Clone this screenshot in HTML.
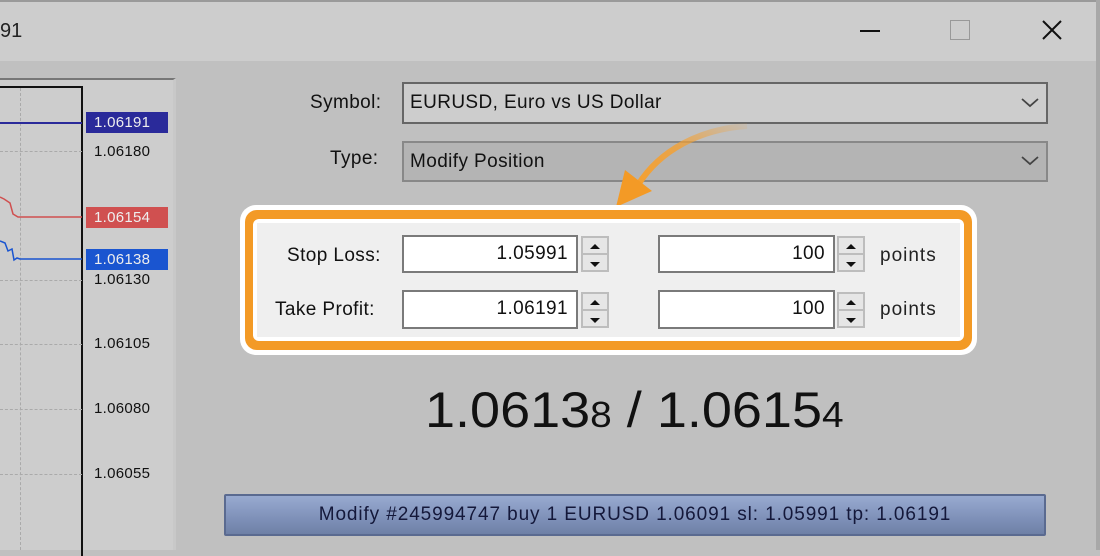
<!DOCTYPE html>
<html><head><meta charset="utf-8"><style>
*{margin:0;padding:0;box-sizing:border-box}
body{width:1100px;height:550px;overflow:hidden;background:#c0c0c0;font-family:"Liberation Sans",sans-serif;position:relative}
.a{position:absolute}
.lbl{font-size:19px;color:#111;letter-spacing:0.4px}
.inp{position:absolute;background:#fff;border:2px solid #7a7a7a;font-size:19px;text-align:right;padding-right:8px;line-height:33px;color:#111;letter-spacing:0.4px}
.spin{position:absolute;width:28px;height:36px;background:#bdbdbd}
.spin div{position:absolute;left:2px;width:24px;height:15px;background:#e6e6e6}
.pl{position:absolute;left:94px;font-size:15px;color:#111;letter-spacing:0.3px}
.tag{position:absolute;left:86px;width:82px;height:21px;color:#eee;font-size:15px;line-height:21px;padding-left:8px;letter-spacing:0.3px}
</style></head><body>
<div class="a" style="left:0;top:0;width:1100px;height:61px;background:#cdcdcd;border-top:2px solid #9a9a9a"></div>
<div class="a" style="left:1096px;top:0;width:4px;height:550px;background:#a8a8a8"></div>
<div class="a" style="left:0;top:20px;font-size:20px;color:#222">91</div>
<div class="a" style="left:860px;top:30px;width:20px;height:2px;background:#111"></div>
<div class="a" style="left:950px;top:20px;width:20px;height:20px;border:1px solid #999"></div>
<svg class="a" style="left:1040px;top:18px" width="24" height="24"><path d="M3 3L21 21M21 3L3 21" stroke="#111" stroke-width="2"/></svg>
<div class="a" style="left:0;top:78px;width:176px;height:472px;background:#cdcdcd;border-top:2px solid #777;border-right:3px solid #c8c8c8"></div>
<div class="a" style="left:0;top:86px;width:83px;height:470px;border-top:2px solid #111;border-right:2px solid #111"></div>
<div class="a" style="left:20px;top:88px;height:462px;border-left:1px dashed #aaa"></div>
<div class="a" style="left:0;top:151px;width:82px;border-top:1px dashed #aaa"></div>
<div class="a" style="left:0;top:280px;width:82px;border-top:1px dashed #aaa"></div>
<div class="a" style="left:0;top:344px;width:82px;border-top:1px dashed #aaa"></div>
<div class="a" style="left:0;top:409px;width:82px;border-top:1px dashed #aaa"></div>
<div class="a" style="left:0;top:474px;width:82px;border-top:1px dashed #aaa"></div>
<div class="a" style="left:0;top:122px;width:82px;height:2px;background:#2a2a9a"></div>
<svg class="a" style="left:0;top:190px" width="84" height="80"><path d="M0 7L4 9L10 13L13 24L18 27L82 27" stroke="#d05050" stroke-width="1.5" fill="none"/><path d="M0 51L5 53L8 61L12 59L14 70L17 68L20 69L20 69L82 69" stroke="#1a55d0" stroke-width="1.5" fill="none"/></svg>
<div class="tag" style="top:112px;background:#2a2a9a">1.06191</div>
<div class="pl" style="top:143px">1.06180</div>
<div class="tag" style="top:207px;background:#d05050">1.06154</div>
<div class="tag" style="top:249px;background:#1a55d0">1.06138</div>
<div class="pl" style="top:271px">1.06130</div>
<div class="pl" style="top:335px">1.06105</div>
<div class="pl" style="top:400px">1.06080</div>
<div class="pl" style="top:465px">1.06055</div>
<div class="a lbl" style="left:310px;top:92px">Symbol:</div>
<div class="a" style="left:402px;top:82px;width:646px;height:42px;background:#cdcdcd;border:2px solid #666;font-size:19px;line-height:38px;padding-left:6px;color:#111;letter-spacing:0.4px">EURUSD, Euro vs US Dollar</div>
<div class="a lbl" style="left:330px;top:148px">Type:</div>
<div class="a" style="left:402px;top:141px;width:646px;height:41px;background:#b4b4b4;border:2px solid #888;font-size:19px;line-height:37px;padding-left:6px;color:#111;letter-spacing:0.4px">Modify Position</div>
<svg class="a" style="left:1020px;top:96px" width="20" height="14"><path d="M2 3L10 10L18 3" stroke="#444" stroke-width="1.8" fill="none"/></svg>
<svg class="a" style="left:1020px;top:154px" width="20" height="14"><path d="M2 3L10 10L18 3" stroke="#444" stroke-width="1.8" fill="none"/></svg>
<svg class="a" style="left:600px;top:115px" width="160" height="100"><defs><linearGradient id="g" x1="1" y1="0" x2="0" y2="1"><stop offset="0" stop-color="#f5a030" stop-opacity="0.1"/><stop offset="0.5" stop-color="#f5a030" stop-opacity="0.8"/><stop offset="1" stop-color="#f5a030"/></linearGradient></defs><path d="M147 11C100 14 60 35 38 70" stroke="url(#g)" stroke-width="6" fill="none"/><path d="M16 92L25 55L52 76Z" fill="#f39a26"/></svg>
<div class="a" style="left:240px;top:205px;width:737px;height:150px;background:#fff;border-radius:16px"></div>
<div class="a" style="left:245px;top:210px;width:727px;height:140px;background:#f39a26;border-radius:12px"></div>
<div class="a" style="left:253px;top:219px;width:711px;height:122px;background:#fff;border-radius:6px"></div>
<div class="a" style="left:257px;top:223px;width:703px;height:114px;background:#efefef"></div>
<div class="a lbl" style="left:287px;top:245px">Stop Loss:</div>
<div class="a lbl" style="left:275px;top:299px">Take Profit:</div>
<div class="inp" style="left:402px;top:235px;width:176px;height:38px">1.05991</div>
<div class="inp" style="left:402px;top:290px;width:176px;height:39px">1.06191</div>
<div class="inp" style="left:658px;top:235px;width:177px;height:38px">100</div>
<div class="inp" style="left:658px;top:290px;width:177px;height:39px">100</div>
<div class="a lbl" style="left:880px;top:245px;color:#222;letter-spacing:1px">points</div>
<div class="a lbl" style="left:880px;top:299px;color:#222;letter-spacing:1px">points</div>
<div class="spin" style="left:581px;top:236px"><div style="top:2px"></div><div style="top:19px"></div></div>
<div class="spin" style="left:581px;top:292px"><div style="top:2px"></div><div style="top:19px"></div></div>
<div class="spin" style="left:837px;top:236px"><div style="top:2px"></div><div style="top:19px"></div></div>
<div class="spin" style="left:837px;top:292px"><div style="top:2px"></div><div style="top:19px"></div></div>
<svg class="a" style="left:581px;top:236px" width="290" height="95"><g fill="#111"><path d="M9 13L19 13L14 8Z"/><path d="M9 26L19 26L14 31Z"/><path d="M9 69L19 69L14 64Z"/><path d="M9 82L19 82L14 87Z"/><path d="M265 13L275 13L270 8Z"/><path d="M265 26L275 26L270 31Z"/><path d="M265 69L275 69L270 64Z"/><path d="M265 82L275 82L270 87Z"/></g></svg>
<div class="a" style="left:425px;top:381px;font-size:50px;color:#111;white-space:nowrap;transform-origin:0 0;transform:scaleX(1.08)">1.0613<span style="font-size:36px">8</span> / 1.0615<span style="font-size:36px">4</span></div>
<div class="a" style="left:224px;top:494px;width:822px;height:42px;background:linear-gradient(#98aad0,#7e90b8 60%,#6e80a6);border:2px solid #5a6a90;border-radius:2px;text-align:center;font-size:19px;line-height:38px;color:#14183a;letter-spacing:0.9px">Modify #245994747 buy 1 EURUSD 1.06091 sl: 1.05991 tp: 1.06191</div>
</body></html>
